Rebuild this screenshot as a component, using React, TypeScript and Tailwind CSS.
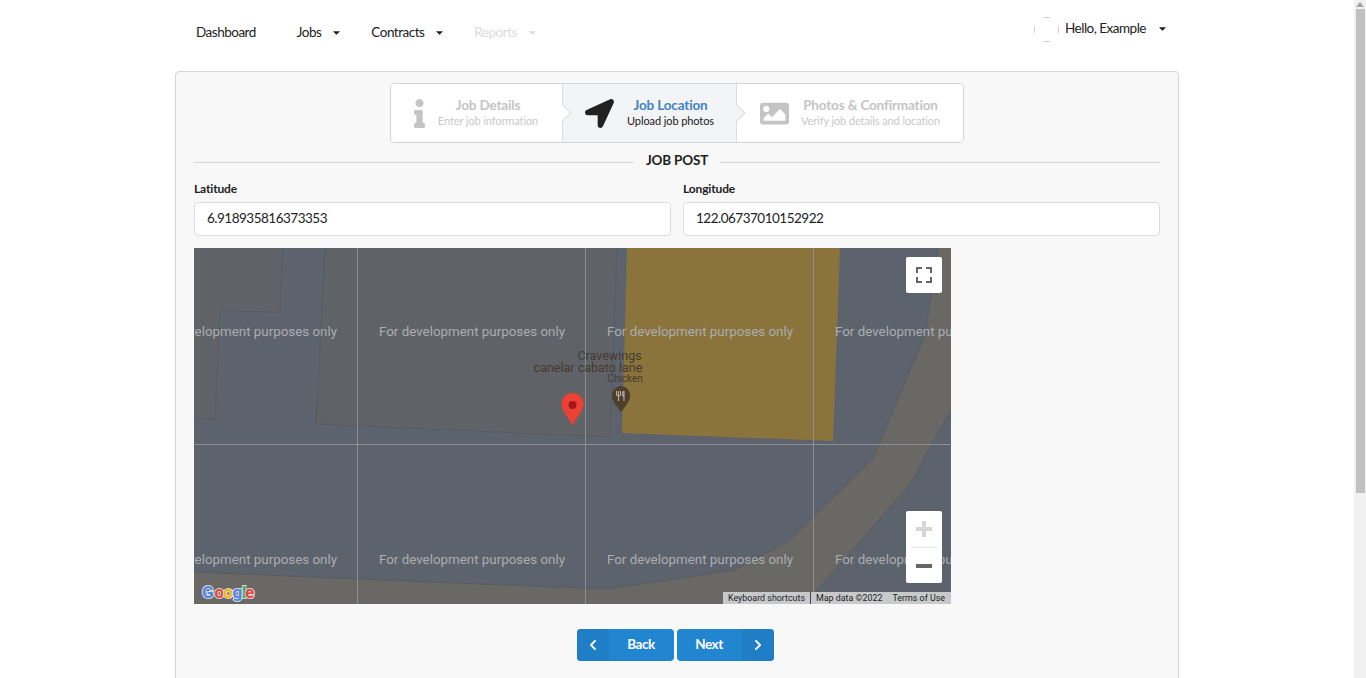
import { FaCaretDown, FaChevronLeft, FaChevronRight, FaImage, FaInfo, FaLocationArrow } from "react-icons/fa"

function NavItem({ label, muted }: { label: string; muted?: boolean }) {
  return (
    <div className={`flex items-center ${muted ? "text-[#dcdcdc]" : "text-[#212121]"}`}>
      <span>{label}</span>
      <FaCaretDown size={11} className="ml-[10px]" />
    </div>
  )
}

function Step({
  title,
  sub,
  icon,
  active,
  arrow,
  className,
}: {
  title: string
  sub: string
  icon: React.ReactNode
  active?: boolean
  arrow?: boolean
  className: string
}) {
  return (
    <div className={`relative flex items-center justify-center ${active ? "bg-[#f3f4f5]" : "bg-white"} ${className}`}>
      {icon}
      <div className="flex flex-col items-center -mt-[1px]">
        <div className={`text-[13.500px] tracking-[-0.15px] leading-[16px] font-bold ${active ? "text-[#4183c4]" : "text-[#c4c4c4]"}`}>{title}</div>
        <div className={`text-[11px] tracking-[-0.1px] leading-[15px] ${active ? "text-[#212121]" : "text-[#c9c9c9]"}`}>{sub}</div>
      </div>
      {arrow && (
        <div
          className={`absolute z-10 right-[-1px] top-1/2 w-[12px] h-[12px] translate-x-1/2 -translate-y-1/2 rotate-45 border-t border-r border-[#dcdddd] ${
            active ? "bg-[#f3f4f5]" : "bg-white"
          }`}
        />
      )}
    </div>
  )
}

function MapDrawing() {
  const wm = [-43, 185, 413, 641]
  return (
    <svg width="757" height="356" viewBox="0 0 757 356" className="block">
      <rect width="757" height="356" fill="#5c636d" />
      <polygon points="0,0 89,0 86,64 26,63 21,171 0,170" fill="#5f6368" />
      <polygon points="131,0 122,176 416,189 423,0" fill="#5f6368" />
      <polygon points="433,0 646,0 639,193 428,185" fill="#8a743c" />
      <polygon
        points="0,324 236,334 413,341 541,322 596,292 679,210 731,87 744,0 757,0 757,162 715,238 611,356 0,356"
        fill="#696865"
      />
      <g fill="none" stroke="#585b62" strokeWidth="1">
        <path d="M89,0 L86,64 L26,63 L21,171 L0,170" />
        <path d="M131,0 L122,176 L416,189 L423,0" />
        <path d="M0,324 L236,334 L413,341 L541,322 L596,292 L679,210 L731,87 L744,0" />
        <path d="M757,162 L715,238 L611,356" />
      </g>
      <g stroke="#8b8e94" strokeWidth="1">
        <line x1="163.5" y1="0" x2="163.5" y2="356" />
        <line x1="391.5" y1="0" x2="391.5" y2="356" />
        <line x1="619.5" y1="0" x2="619.5" y2="356" />
        <line x1="0" y1="196.5" x2="757" y2="196.5" />
      </g>
      <g fontFamily="Roboto, sans-serif" fontSize="13.35" fill="#abadb1">
        {wm.map((x) => (
          <text key={x} x={x} y="87.5">For development purposes only</text>
        ))}
        {wm.map((x) => (
          <text key={x} x={x} y="315.5">For development purposes only</text>
        ))}
      </g>
      <g fontFamily="Roboto, sans-serif" fill="#463a2e">
        <text x="415.500" y="111.500" fontSize="12.500" textAnchor="middle">Cravewings</text>
        <text x="394" y="124" fontSize="12.500" textAnchor="middle">canelar cabato lane</text>
        <text x="431" y="133.500" fontSize="10" textAnchor="middle">Chicken</text>
      </g>
      <path d="M427,164 C420,155 418,152 418,147 A9,9 0 1 1 436,147 C436,152 434,155 427,164 Z" fill="#4c3f2c" />
      <path d="M424.500,143 v10 M422.500,143 v3.500 q0,1.500 2,1.500 q2,0 2,-1.500 v-3.500 M430,143 v10 M430,143 c-2,1 -2,5 0,6" stroke="#b9b2a5" strokeWidth="1.1" fill="none" />
      <path
        d="M378.500,178 C375,169 368,164 367.500,156 A11,11 0 1 1 389.500,156 C389,164 382,169 378.500,178 Z"
        fill="#ea4335"
        stroke="#d33a2e"
        strokeWidth="0.5"
      />
      <circle cx="378.500" cy="157" r="4" fill="#a8141a" />
      <g fontFamily="Roboto, sans-serif" fontSize="17" fontWeight="700" stroke="#d8d8d8" strokeWidth="2" paintOrder="stroke">
        <text x="8" y="350" fill="#4e86e8">G</text>
        <text x="20.500" y="350" fill="#e8453c">o</text>
        <text x="29.500" y="350" fill="#f2b90f">o</text>
        <text x="38.500" y="350" fill="#4e86e8">g</text>
        <text x="48" y="350" fill="#34a853">l</text>
        <text x="51" y="350" fill="#e8453c">e</text>
      </g>
    </svg>
  )
}

export default function App() {
  return (
    <div className="font-['Lato','Noto_Sans',sans-serif] text-[13.500px] tracking-[-0.5px] text-[#212121] bg-white h-[922px]">
      <div className="fixed right-0 top-0 w-[12px] h-[678px] bg-[#f1f1f1] flex flex-col items-center">
        <svg width="8" height="5" viewBox="0 0 8 5" className="mt-[2px]">
          <path d="M4,0 L8,5 H0 Z" fill="#a3a3a3" />
        </svg>
        <div className="w-[9px] h-[484px] bg-[#c1c1c1] mt-[2px]" />
      </div>

      <div className="w-[1004px] ml-[175px]">
        <div className="h-[64px] flex items-center pl-[21px] pr-[11px] justify-between">
          <div className="flex items-center gap-[41px]">
            <div>Dashboard</div>
            <div className="flex items-center gap-[29px]">
              <NavItem label="Jobs" />
              <NavItem label="Contracts" />
              <NavItem label="Reports" muted />
            </div>
          </div>
          <div className="flex items-center -mt-[7px]">
            <div className="w-[25px] h-[25px] rounded-full overflow-hidden bg-white mt-[1px]">
              <div className="w-[25px] h-[25px] border border-[#c8c8c8]" />
            </div>
            <span className="ml-[6px]">Hello, Example</span>
            <FaCaretDown size={11} className="ml-[11px]" />
          </div>
        </div>

        <div className="mt-[7px] bg-[#f8f8f8] border border-[#d4d4d5] rounded-[4px] h-[851px] px-[18px] pt-[11px]">
          <div className="flex justify-center">
            <div className="flex h-[60px] w-[574px] border border-[#d4d4d5] rounded-[4px] overflow-hidden bg-white">
              <Step
                className="w-[172px] border-r border-[#dcdddd] gap-[4px] pr-[10px]"
                title="Job Details"
                sub="Enter job information"
                arrow
                icon={<FaInfo size={29} className="text-[#c4c4c4]" />}
              />
              <Step
                className="w-[174px] border-r border-[#dcdddd] gap-[13px]"
                title="Job Location"
                sub="Upload job photos"
                active
                arrow
                icon={<FaLocationArrow size={29} className="text-[#212121]" />}
              />
              <Step
                className="flex-1 gap-[12px]"
                title="Photos & Confirmation"
                sub="Verify job details and location"
                icon={<FaImage size={29} className="text-[#c4c4c4]" />}
              />
            </div>
          </div>

          <div className="flex items-center mt-[9px] h-[18px]">
            <div className="flex-1 border-t border-[#d4d4d5] mt-[2px]" />
            <div className="px-[12px] font-bold uppercase leading-[18px] tracking-[-0.2px] -mt-[2px]">Job Post</div>
            <div className="flex-1 border-t border-[#d4d4d5] mt-[2px]" />
          </div>

          <div className="grid grid-cols-2 gap-[12px] mt-[10px]">
            <div>
              <div className="text-[12px] tracking-[-0.15px] font-bold leading-[17px] mb-[5px]">Latitude</div>
              <div className="h-[34px] bg-white border border-[#dedede] rounded-[4px] px-[12px] pb-[2px] flex items-center">
                6.918935816373353
              </div>
            </div>
            <div>
              <div className="text-[12px] tracking-[-0.15px] font-bold leading-[17px] mb-[5px]">Longitude</div>
              <div className="h-[34px] bg-white border border-[#dedede] rounded-[4px] px-[12px] pb-[2px] flex items-center">
                122.06737010152922
              </div>
            </div>
          </div>

          <div className="relative mt-[12px] w-[757px] h-[356px] overflow-hidden font-['Roboto',sans-serif] tracking-normal">
            <MapDrawing />
            <div className="absolute top-[9px] right-[9px] w-[36px] h-[36px] bg-white rounded-[2px] flex items-center justify-center">
              <svg width="16" height="16" viewBox="0 0 16 16" fill="none" stroke="#666" strokeWidth="2">
                <path d="M1,6 V1 H6 M10,1 H15 V6 M15,10 V15 H10 M6,15 H1 V10" />
              </svg>
            </div>
            <div className="absolute top-[263px] right-[9px] w-[36px] h-[72px] bg-white rounded-[2px] flex flex-col items-center">
              <div className="h-[36px] flex items-center justify-center">
                <div className="relative w-[16px] h-[16px]">
                  <div className="absolute left-0 top-[6px] w-[16px] h-[4px] bg-[#d6d6d6]" />
                  <div className="absolute left-[6px] top-0 w-[4px] h-[16px] bg-[#d6d6d6]" />
                </div>
              </div>
              <div className="w-[27px] border-t border-[#e6e6e6]" />
              <div className="flex-1 flex items-center justify-center">
                <div className="w-[16px] h-[4px] bg-[#666]" />
              </div>
            </div>
            <div className="absolute bottom-0 right-0 h-[12px] w-[228px] bg-[#c8c9cb] flex items-center text-[8.900px] leading-[12px] text-[#222] whitespace-nowrap">
              <span className="pl-[5px] pr-[5px] border-r border-[#444]">Keyboard shortcuts</span>
              <span className="pl-[5px]">Map data ©2022</span>
              <span className="pl-[10px]">Terms of Use</span>
            </div>
          </div>

          <div className="flex justify-center gap-[3px] mt-[25px] pr-[4px]">
            <button className="w-[97px] h-[32px] bg-[#2185d0] text-white font-bold rounded-[4px] overflow-hidden flex items-center">
              <span className="w-[32px] h-full bg-[#1f7ec6] flex items-center justify-center">
                <FaChevronLeft size={12} />
              </span>
              <span className="flex-1 text-center pb-[2px]">Back</span>
            </button>
            <button className="w-[97px] h-[32px] bg-[#2185d0] text-white font-bold rounded-[4px] overflow-hidden flex items-center">
              <span className="flex-1 text-center pb-[2px]">Next</span>
              <span className="w-[32px] h-full bg-[#1f7ec6] flex items-center justify-center">
                <FaChevronRight size={12} />
              </span>
            </button>
          </div>
        </div>
      </div>
    </div>
  )
}
